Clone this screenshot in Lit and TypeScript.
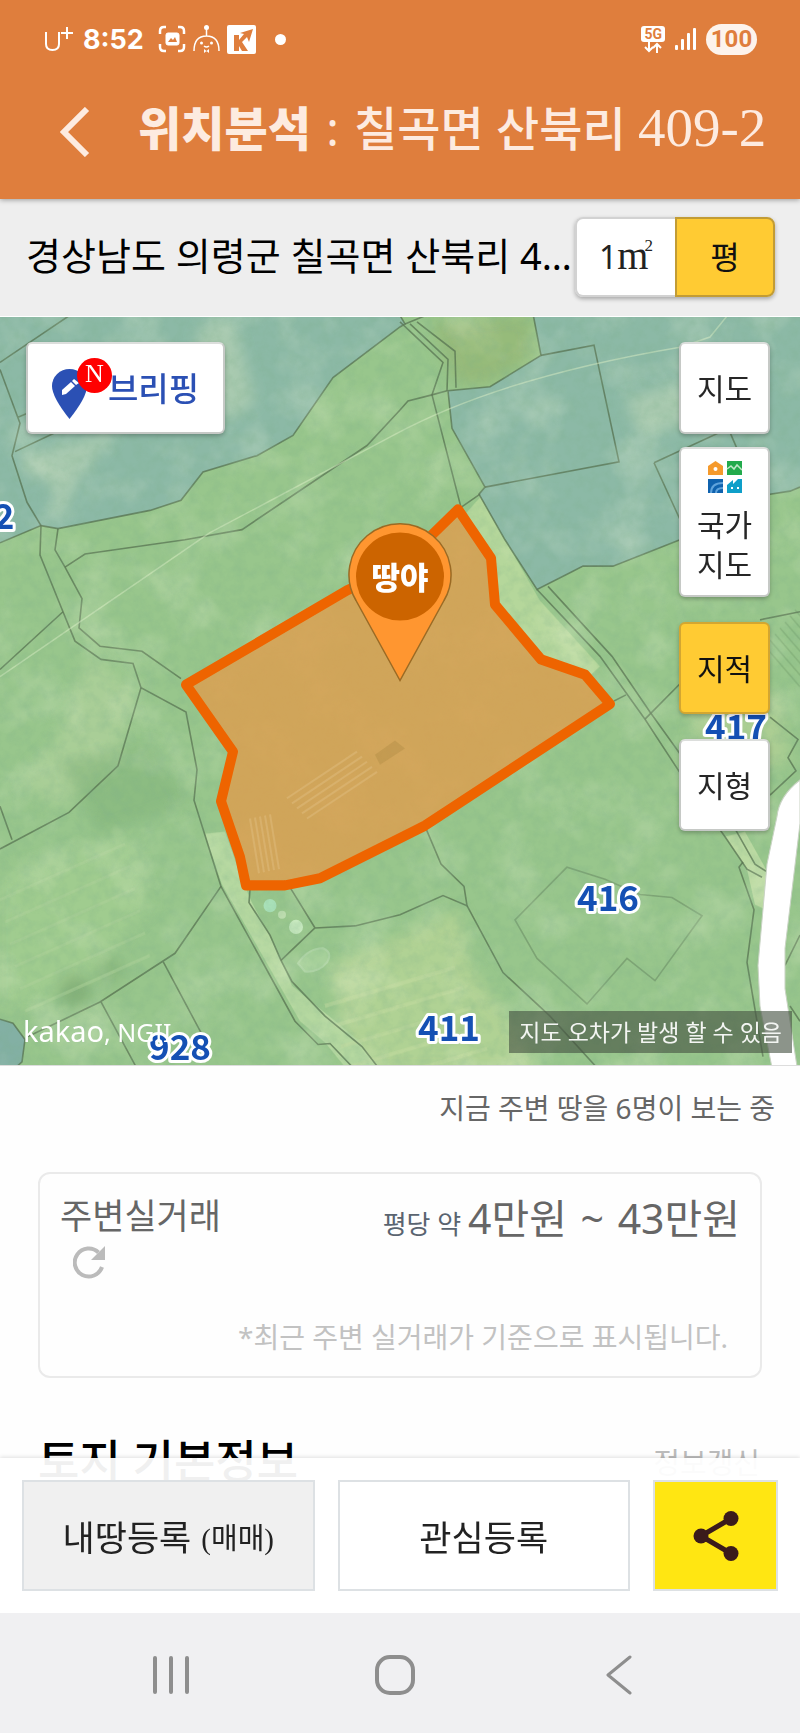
import { LitElement, html, css, svg } from "lit";
import { customElement, property, state } from "lit/decorators.js";
import { classMap } from "lit/directives/class-map.js";

const sans = css`"Noto Sans", "Noto Sans CJK KR", sans-serif`;
const serif = css`"Liberation Serif", "Noto Sans CJK KR", serif`;

/* Cadastral boundaries, in map canvas coordinates. */
const BOUNDARIES = [
  "M72 317L0 365M0 372L20 425L12 457L27 503L41 526M18 419L28 415M15 453L56 434",
  "M400 412L367 447L242 530L185 540L85 554L65 567",
  "M41 526L40 555L63 611L75 640L101 658L133 662L141 686L186 710L197 767L194 797L221 882L295 1015L318 1038L330 1037L358 1066",
  "M58 529L55 550L65 567L82 598L79 627L100 645L142 650L181 677",
  "M63 611L0 668M141 686L118 763L69 809L0 845M0 803L12 836",
  "M221 882L175 948L100 996L60 1015L28 1030M163 956L203 1030M101 996L136 1060",
  "M250 885L249 898L270 930L281 955L292 976L325 1010L362 1040L380 1063",
  "M281 955L315 923L290 883M315 923L355 921L400 910L443 891L467 901L464 882L441 860L426 825",
  "M467 901L503 967L550 1010L598 1062",
  "M485 488L619 463L594 348L541 358M654 464L680 520M654 464L720 434L730 434L737 450",
  "M400 325L443 365L432 397L461 508M410 327L448 362L447 393M417 325L455 354L456 390",
  "M447 393L432 397L408 403L400 412M405 327L430 317M461 508L480 495",
  "M537 589L600 655L645 717L690 785L725 833L747 865L762 873M548 586L612 655L650 710L690 765L735 825L755 860L766 867",
  "M614 699L626 693M645 717L680 682M760 619L800 611M770 715L798 737L788 755L796 768L770 792",
  "M743 858L739 863L754 905L747 957L763 1050M785 960L800 930M790 1000L800 1015",
];

@customElement("land-map")
class LandMap extends LitElement {
  static styles = css`
    :host {
      display: block;
      position: absolute;
      inset: 0;
    }
    svg {
      display: block;
      width: 100%;
      height: 100%;
    }
    .edge {
      fill: none;
      stroke: #55704f;
      stroke-width: 1.6;
      stroke-opacity: 0.75;
    }
    .faint {
      stroke-opacity: 0.4;
    }
    .wire {
      fill: none;
      stroke: #d9edc4;
      stroke-width: 1.5;
      stroke-opacity: 0.5;
    }
    .lot {
      font: 700 35px/1 "Noto Sans CJK KR", sans-serif;
      fill: #1450b4;
      stroke: #fff;
      stroke-width: 6;
      stroke-linejoin: round;
      paint-order: stroke;
      text-anchor: middle;
    }
    .pin-text {
      font: 900 31px/1 "Noto Sans CJK KR", sans-serif;
      fill: #fff;
      text-anchor: middle;
    }
    .credit {
      font: 400 29px/1 "Noto Sans", sans-serif;
      fill: #fff;
    }
    .small {
      font-size: 25px;
    }
  `;

  private field(x: number, y: number, n: number, dx: number, dy: number, gx: number, gy: number) {
    return Array.from(
      { length: n },
      (_, i) => svg`<path d=${`M${x + gx * i} ${y + gy * i}l${dx} ${dy}`} />`,
    );
  }

  render() {
    return html`<svg viewBox="0 317 800 749" preserveAspectRatio="xMidYMid slice" role="img" aria-label="지적도">
      <defs>
        <filter id="grain" x="0" y="0" width="100%" height="100%">
          <feTurbulence type="fractalNoise" baseFrequency="0.09" numOctaves="4" seed="7" />
          <feColorMatrix values="0 0 0 0 0.2  0 0 0 0 0.42  0 0 0 0 0.25  1.3 0 0 0 -0.5" />
        </filter>
        <filter id="haze" x="0" y="0" width="100%" height="100%">
          <feTurbulence type="fractalNoise" baseFrequency="0.018" numOctaves="4" seed="21" />
          <feColorMatrix values="0 0 0 0 0.9  0 0 0 0 0.95  0 0 0 0 0.72  2.2 0 0 0 -1.02" />
        </filter>
        <filter id="soft" x="-30%" y="-30%" width="160%" height="160%">
          <feGaussianBlur stdDeviation="7" />
        </filter>
      </defs>
      <rect y="317" width="800" height="749" fill="#98c68c" />

      <g transform="translate(0 -7) scale(1 1.0135)">
        <g filter="url(#soft)">
          <path d="M90 650L135 690L118 755L60 805L20 780L55 740Z" fill="#b0d29b" opacity=".7" />
          <path d="M330 960L460 905L470 960L500 1000L540 1066L350 1066Z" fill="#b6d496" opacity=".8" />
          <path d="M0 870L130 830L150 900L90 970L0 1010Z" fill="#a3cd90" opacity=".8" />
          <path d="M430 325L530 317L535 360L485 388L455 385Z" fill="#96b877" opacity=".8" />
          <path d="M690 700L780 690L790 760L700 780Z" fill="#b0cf95" opacity=".8" />
          <path d="M60 760L150 740L190 800L100 830Z" fill="#80b277" opacity=".5" />
          <circle cx="75" cy="985" r="16" fill="#77a46c" opacity=".6" />
          <circle cx="110" cy="965" r="14" fill="#7cab72" opacity=".5" />
        </g>
        <path d="M464 516L481 497L505 540L540 600L600 665L590 674L541 655L497 604L493 556Z" fill="#b5d79b" />
        <path d="M205 830L225 828L240 870L252 898L272 935L292 980L360 1035L380 1066L350 1066L325 1036L300 1015L222 880Z" fill="#b5d8a0" />
        <path d="M725 833L745 828L766 865L766 905L755 900L747 865Z" fill="#bbdaa2" />
        <g stroke="#c3dba0" stroke-width="4" opacity=".5">
          ${this.field(325, 1000, 5, 130, -38, 8, 20)}
        </g>
        <g stroke="#aed19a" stroke-width="3" opacity=".5">
          ${this.field(0, 895, 6, 125, -55, 5, 22)}
        </g>
        <g stroke="#7da874" stroke-width="1.5" opacity=".6">
          ${this.field(765, 645, 7, 35, 40, 5, -6)}
        </g>
        <path d="M298 958q10 -15 25 -15q10 4 4 14q-8 10 -22 9z" fill="#a4cf98" stroke="#aed4a4" stroke-width="2" />
        <circle cx="270" cy="901" r="6.500" fill="#a8e0b8" />
        <circle cx="282" cy="910" r="4" fill="#bcdcae" />
        <circle cx="296" cy="922" r="7" fill="#c5e8bd" />

        <g fill="#8cb9a6">
          <path d="M0 317H399L405 327L400 330L333 380L293 437L257 457L203 473L181 501L150 511L58 529L41 526L0 543Z" />
          <path d="M533 317L541 358L490 389L448 393L452 430L485 488L479 495L505 540L537 589L583 566L613 566L680 540L770 495L790 492L800 488V317Z" />
          <path d="M0 1013L13 1017L25 1033L22 1055L10 1066H0Z" fill="#83b0a4" />
        </g>
        <g filter="url(#soft)" fill="#b8d3b5" opacity=".65">
          <path d="M20 458L120 432L85 470L60 520L50 518L55 485L25 475Z" />
          <path d="M205 325L235 325L255 405L225 425L195 345Z" />
          <path d="M625 400L680 385L705 420L640 440Z" />
        </g>
        <g class="edge">
          <path d="M0 543L41 526L58 529L150 511L181 501L203 473L257 457L293 437L333 380L400 330L405 327L399 317" />
          <path d="M533 317L541 358L490 389L448 393L452 430L485 488L479 495L505 540L537 589L583 566L613 566L680 540L770 495L790 492L800 488" />
          <path d="M0 1013L13 1017L25 1033L22 1055L10 1066" />
          ${BOUNDARIES.map((d) => svg`<path d=${d} />`)}
        </g>
        <path class="edge faint" d="M567 863L515 915L537 953L587 998L627 953L655 975L702 911L672 893L640 890L605 875Z" />
        <path class="wire" d="M0 675L210 533L395 436Q500 380 680 350L710 340L728 318" />
      </g>
      <rect y="317" width="800" height="749" filter="url(#haze)" opacity=".28" />
      <rect y="317" width="800" height="749" filter="url(#grain)" opacity=".36" />

      <g transform="translate(0 -7) scale(1 1.0135)">
        <path
          d="M800 777Q779 793 777 813L767 860L758 960L760 1000L773 1066H798L785 983V943L800 820Z"
          fill="#fff"
          stroke="#c9d3c4"
        />
        <path
          d="M458 510L491 558L495 604L541 658L585 673L610 702L425 822L320 874L285 881L246 881L240 853L221 798L233 749L186 683L347 590L400 566Z"
          fill="#daa052"
          fill-opacity=".86"
          stroke="#ee6400"
          stroke-width="10"
          stroke-linejoin="round"
        />
        <g stroke="#ddb878" stroke-width="2" opacity=".6">
          ${this.field(287, 795, 5, 70, -46, 5, 5)}
          ${this.field(250, 815, 5, 9, 54, 5, -1)}
        </g>
        <path d="M375 752l20 -14l10 8l-25 16z" fill="#b58f48" opacity=".5" />
      </g>

      <path d="M400 681L356 601A51 51 0 1 1 444 601Z" fill="#ff9630" stroke="#9a6a24" stroke-width="1.500" />
      <circle cx="400" cy="577" r="44" fill="#cc6400" />
      <text class="pin-text" x="400" y="589">땅야</text>

      <text class="lot" x="4" y="529">2</text>
      <text class="lot" x="736" y="740">417</text>
      <text class="lot" x="608" y="911">416</text>
      <text class="lot" x="449" y="1041">411</text>
      <text class="lot" x="180" y="1060">928</text>
      <text class="credit" x="23" y="1042">kakao<tspan class="small">, NGII</tspan></text>
    </svg>`;
  }
}

@customElement("status-bar")
class StatusBar extends LitElement {
  static styles = css`
    :host {
      display: flex;
      align-items: center;
      gap: 10px;
      height: 78px;
      padding: 0 43px;
      color: #fff;
      font-family: Inter, Roboto, sans-serif;
    }
    svg {
      display: block;
      flex: none;
    }
    .time {
      font-size: 27px;
      font-weight: 700;
    }
    .icons {
      display: flex;
      align-items: center;
      gap: 7px;
      margin-left: 4px;
      flex: 1;
    }
    .dot {
      width: 11px;
      height: 11px;
      margin-left: 12px;
      border-radius: 50%;
      background: #fff;
    }
    .net {
      display: grid;
      justify-items: center;
    }
    .gen {
      padding: 0 3px;
      border-radius: 3px;
      background: #fff;
      color: #df7e3d;
      font: 700 14px/16px Roboto, sans-serif;
    }
    .battery {
      min-width: 51px;
      border-radius: 16px;
      background: #fdf3ec;
      color: #df7e3d;
      font: 700 24px/31px Roboto, sans-serif;
      text-align: center;
    }
  `;

  render() {
    return html`
      <svg width="30" height="26" viewBox="0 0 30 26" fill="none" stroke="#fff" stroke-width="2">
        <path d="M3 6V18Q3 24 9.500 24T16 18V6M24 1V13M18 7H30" />
      </svg>
      <span class="time">8:52</span>
      <span class="icons">
        <svg width="28" height="28" viewBox="0 0 28 28" fill="none" stroke="#fff" stroke-width="2.500">
          <path d="M2 9V6Q2 2 6 2H8M20 2H22Q26 2 26 6V9M26 19V22Q26 26 22 26H20M8 26H6Q2 26 2 22V19" />
          <rect x="8" y="8" width="13" height="12" rx="2" fill="#fff" stroke-width="1" />
          <path d="M10 17L13 13L15 15L17 12L19 17Z" fill="#df7e3d" stroke="none" />
        </svg>
        <svg width="27" height="28" viewBox="0 0 27 28" fill="none" stroke="#fff" stroke-width="1.500">
          <path d="M1 26Q1 11 13.500 11T26 26M13.500 11V4M11 21q2.500 2 5 0" />
          <circle cx="13.500" cy="2.500" r="2.500" fill="#fff" stroke="none" />
          <circle cx="8.500" cy="18" r="1.500" fill="#fff" stroke="none" />
          <circle cx="18.500" cy="18" r="1.500" fill="#fff" stroke="none" />
          <path d="M11 24L16 28V24L11 28Z" fill="#fff" stroke="none" />
        </svg>
        <svg width="29" height="29" viewBox="0 0 29 29">
          <rect width="29" height="29" rx="2" fill="#fff" />
          <path d="M7 10H12V15L17 9L13 8L26 4L22 17L20 12L15 17L21 26H15L12 21V26H7Z" fill="#df7e3d" />
        </svg>
        <i class="dot"></i>
      </span>
      <span class="net">
        <span class="gen">5G</span>
        <svg width="18" height="11" viewBox="0 0 18 11" fill="none" stroke="#fff" stroke-width="2">
          <path d="M5 0V9M1 5L5 9L9 5M13 11V2M9 6L13 2L17 6" />
        </svg>
      </span>
      <svg width="21" height="22" viewBox="0 0 21 22" fill="#fff">
        <rect y="17" width="3" height="5" rx="1" />
        <rect x="6" y="11" width="3" height="11" rx="1" />
        <rect x="12" y="5" width="3" height="17" rx="1" />
        <rect x="18" width="3" height="22" rx="1" />
      </svg>
      <span class="battery">100</span>
    `;
  }
}

@customElement("map-button")
class MapButton extends LitElement {
  @property({ type: Boolean }) active = false;

  static styles = css`
    :host {
      display: block;
    }
    button {
      display: flex;
      flex-direction: column;
      align-items: center;
      justify-content: center;
      gap: 12px;
      width: 100%;
      min-height: 92px;
      padding: 12px 8px 10px;
      border: 2px solid #c6c9c6;
      border-top-color: #dcdedc;
      border-radius: 6px;
      background: #fff;
      box-shadow: 0 2px 4px rgba(0, 0, 0, 0.25);
      color: #262626;
      font: 400 30px/40px ${sans};
    }
    .on {
      border-color: #d3a631;
      background: #ffcb33;
      color: #111;
    }
  `;

  render() {
    return html`<button class=${classMap({ on: this.active })} aria-pressed=${this.active}>
      <slot></slot>
    </button>`;
  }
}

@customElement("app-root")
class AppRoot extends LitElement {
  @state() private unit: "m2" | "py" = "py";

  static styles = css`
    :host {
      display: block;
      min-height: 100vh;
      background: #fefefe;
      color: #000;
      font-family: ${sans};
    }
    * {
      box-sizing: border-box;
    }
    button {
      margin: 0;
      padding: 0;
      border: 0;
      background: none;
      color: inherit;
      font: inherit;
      cursor: pointer;
    }
    svg {
      display: block;
    }
    h1,
    h2,
    p {
      margin: 0;
      font-weight: 400;
    }
    .header {
      position: relative;
      z-index: 1;
      background: #df7e3d;
      color: #fdebe0;
      box-shadow: 0 1px 5px rgba(0, 0, 0, 0.35);
    }
    .titlebar {
      display: flex;
      align-items: center;
      gap: 48px;
      height: 121px;
      padding: 0 32px 14px 60px;
    }
    .title {
      flex: 1;
      padding-bottom: 8px;
      font-size: 47px;
      line-height: 64px;
      font-weight: 500;
      white-space: nowrap;
    }
    .title b {
      font-weight: 900;
    }
    .thin {
      margin: 0 3px;
      font-weight: 400;
    }
    .lot {
      font-family: ${serif};
      font-size: 55px;
      font-weight: 400;
      line-height: 1;
    }
    .address-row {
      display: flex;
      align-items: center;
      height: 118px;
      padding: 0 25px 6px 26px;
      border-bottom: 1px solid #fff;
      background: #eee;
    }
    .address {
      flex: 1;
      min-width: 0;
      overflow: hidden;
      font-size: 38px;
      line-height: 56px;
      text-overflow: ellipsis;
      white-space: nowrap;
    }
    .units {
      display: grid;
      grid-template-columns: 1fr 1fr;
      flex: none;
      width: 200px;
      height: 80px;
      margin-top: 4px;
      border-radius: 8px;
      box-shadow: 0 2px 4px rgba(0, 0, 0, 0.3);
    }
    .unit {
      border: 2px solid #d2d2d2;
      border-right-width: 0;
      border-radius: 8px 0 0 8px;
      background: #fff;
      color: #222;
      font-size: 32px;
    }
    .unit + .unit {
      padding-bottom: 4px;
      border-right-width: 2px;
      border-radius: 0 8px 8px 0;
    }
    .unit.on {
      border-color: #c29c35;
      background: #ffcb33;
      color: #111;
    }
    .unit .m {
      font-family: ${serif};
      font-size: 40px;
      line-height: 1;
    }
    .unit .m sup {
      margin-left: -4px;
      font-size: 17px;
      line-height: 0;
      vertical-align: 18px;
    }
    .map {
      position: relative;
      height: 749px;
      border-bottom: 1px solid #ddd;
      overflow: hidden;
    }
    .briefing {
      position: absolute;
      top: 25px;
      left: 26px;
      width: 199px;
    }
    .briefing-row {
      display: flex;
      align-items: center;
      gap: 21px;
      color: #2b50b4;
      font-size: 33px;
      font-weight: 500;
    }
    .pin {
      position: relative;
      padding-top: 8px;
      margin-bottom: -2px;
    }
    .new {
      position: absolute;
      top: -3px;
      left: 25px;
      width: 35px;
      height: 35px;
      border-radius: 50%;
      background: #f00;
      color: #fff;
      font: 400 26px/32px ${serif};
      text-align: center;
    }
    .tools {
      position: absolute;
      top: 25px;
      right: 30px;
      display: grid;
      gap: 25px;
      width: 91px;
    }
    .group {
      display: grid;
      gap: 13px;
    }
    .two-line {
      max-width: 60px;
      text-align: center;
    }
    .notice {
      position: absolute;
      right: 8px;
      bottom: 12px;
      padding: 0 10px;
      background: rgba(70, 82, 66, 0.62);
      color: #f3f5f2;
      font-size: 23px;
      line-height: 42px;
    }
    .content {
      display: grid;
      padding: 20px 38px 0;
    }
    .viewers {
      margin: 0 -13px 42px 0;
      color: #666;
      font-size: 28px;
      line-height: 44px;
      text-align: right;
    }
    .card {
      display: grid;
      gap: 36px;
      height: 206px;
      padding: 12px 20px;
      border: 2px solid #eaeaea;
      border-radius: 12px;
      color: #666;
      align-content: start;
    }
    .deal {
      display: flex;
      justify-content: space-between;
      align-items: flex-start;
    }
    .label {
      font-size: 35px;
      line-height: 60px;
    }
    .refresh {
      display: block;
      margin-left: 13px;
    }
    .price {
      font-size: 41px;
      line-height: 64px;
    }
    .tilde {
      margin: 0 3px;
    }
    .approx {
      color: #5a6470;
      font-size: 26px;
    }
    .note {
      padding-right: 12px;
      color: #c2c2c2;
      font-size: 28px;
      line-height: 44px;
      text-align: right;
    }
    .section {
      display: flex;
      align-items: center;
      justify-content: space-between;
      margin-top: 51px;
      padding-right: 2px;
    }
    .section h2 {
      font-size: 45px;
      font-weight: 500;
      line-height: 64px;
    }
    .update {
      color: #bbb;
      font-size: 29px;
    }
    .dock {
      position: fixed;
      right: 0;
      bottom: 0;
      left: 0;
    }
    .actions {
      display: grid;
      grid-template-columns: 1fr 1fr 125px;
      gap: 23px;
      padding: 22px;
      background: rgba(255, 255, 255, 0.94);
      box-shadow: 0 -1px 4px rgba(0, 0, 0, 0.12);
    }
    .action {
      display: flex;
      align-items: center;
      justify-content: center;
      gap: 10px;
      height: 111px;
      border: 2px solid #dde1e4;
      background: #fff;
      color: #222;
      font-size: 35px;
    }
    .mine {
      background: #f0f0f0;
    }
    .kind {
      font-family: ${serif};
      font-size: 29px;
    }
    .share {
      background: #ffe612;
    }
    .nav {
      display: grid;
      grid-template-columns: repeat(3, 224px);
      justify-content: center;
      align-items: center;
      height: 120px;
      padding: 4px 10px 0 0;
      background: #f0f0f2;
    }
    .nav button {
      display: grid;
      place-items: center;
      height: 80px;
    }
  `;

  render() {
    return html`
      <header class="header">
        <status-bar></status-bar>
        <div class="titlebar">
          <button aria-label="뒤로">
            <svg width="30" height="50" viewBox="0 0 30 50" fill="none" stroke="#fdebe0" stroke-width="6">
              <path d="M27 2L4 25L27 48" />
            </svg>
          </button>
          <h1 class="title"><b>위치분석</b> <span class="thin">:</span> 칠곡면 산북리 <span class="lot">409-2</span></h1>
        </div>
      </header>

      <div class="address-row">
        <p class="address">경상남도 의령군 칠곡면 산북리 409-2</p>
        <div class="units" role="group" aria-label="면적 단위">
          <button class=${classMap({ unit: true, on: this.unit === "m2" })} @click=${() => (this.unit = "m2")}>
            1<span class="m">m<sup>2</sup></span>
          </button>
          <button class=${classMap({ unit: true, on: this.unit === "py" })} @click=${() => (this.unit = "py")}>
            평
          </button>
        </div>
      </div>

      <section class="map">
        <land-map></land-map>
        <map-button class="briefing">
          <span class="briefing-row">
            <span class="pin">
              <svg width="35" height="50" viewBox="0 0 35 50">
                <path d="M17.500 50Q0 28 0 17A17.500 17 0 0 1 35 17Q35 28 17.500 50Z" fill="#2b50b4" />
                <path d="M10 21L19 13L23 17L14 25L10 26ZM20 12L22 10L27 14L24 16Z" fill="#fff" />
              </svg>
              <span class="new">N</span>
            </span>
            브리핑
          </span>
        </map-button>
        <div class="tools">
          <div class="group">
            <map-button>지도</map-button>
            <map-button>
              <svg width="34" height="32" viewBox="0 0 34 32">
                <path d="M0 14V5L7.500 0L15 5V14Z" fill="#f59a2c" />
                <circle cx="7.500" cy="8" r="2" fill="#fff" />
                <rect x="19" width="15" height="14" fill="#22aa4c" />
                <path d="M19 8L23 5L26 8L29 4L34 9" fill="none" stroke="#bfe8c8" stroke-width="1.500" />
                <rect y="18" width="15" height="14" fill="#0f62ae" />
                <path d="M3 32Q3 22 15 22M8 32Q8 27 15 27" fill="none" stroke="#5fa3dc" stroke-width="2" />
                <path d="M19 32V24L25 19V23L30 18H34V32Z" fill="#0e9fc9" />
                <path d="M23 26h2v2h-2zM29 26h2v2h-2z" fill="#fff" />
              </svg>
              <span class="two-line">국가 지도</span>
            </map-button>
          </div>
          <map-button active>지적</map-button>
          <map-button>지형</map-button>
        </div>
        <p class="notice">지도 오차가 발생 할 수 있음</p>
      </section>

      <main class="content">
        <p class="viewers">지금 주변 땅을 6명이 보는 중</p>
        <section class="card">
          <div class="deal">
            <div>
              <p class="label">주변실거래</p>
              <button class="refresh" aria-label="새로고침">
                <svg width="32" height="33" viewBox="0 0 32 33" fill="none">
                  <path d="M25.500 6.500A14 14 0 1 0 29 21" stroke="#bbb" stroke-width="4" />
                  <path d="M32 0V14H18Z" fill="#bbb" />
                </svg>
              </button>
            </div>
            <p class="price"><span class="approx">평당 약 </span>4만원 <span class="tilde">~</span> 43만원</p>
          </div>
          <p class="note">*최근 주변 실거래가 기준으로 표시됩니다.</p>
        </section>
        <section class="section">
          <h2>토지 기본정보</h2>
          <button class="update">정보갱신</button>
        </section>
      </main>

      <footer class="dock">
        <div class="actions">
          <button class="action mine">내땅등록 <span class="kind">(매매)</span></button>
          <button class="action">관심등록</button>
          <button class="action share" aria-label="공유">
            <svg width="46" height="50" viewBox="0 0 46 50" fill="#3b1b1b">
              <path d="M38 7.500L8 25L38 42.500" fill="none" stroke="#3b1b1b" stroke-width="5" />
              <circle cx="38" cy="7.500" r="7.500" />
              <circle cx="8" cy="25" r="7.500" />
              <circle cx="38" cy="42.500" r="7.500" />
            </svg>
          </button>
        </div>
        <nav class="nav">
          <button aria-label="최근 앱">
            <svg width="38" height="40" viewBox="0 0 38 40" stroke="#8e8e8e" stroke-width="4" stroke-linecap="round">
              <path d="M3 3V37M19 3V37M35 3V37" />
            </svg>
          </button>
          <button aria-label="홈">
            <svg width="40" height="40" viewBox="0 0 40 40" fill="none" stroke="#8e8e8e" stroke-width="4">
              <rect x="2" y="2" width="36" height="36" rx="13" />
            </svg>
          </button>
          <button aria-label="이전">
            <svg width="26" height="40" viewBox="0 0 26 40" fill="none" stroke="#8e8e8e" stroke-width="3" stroke-linecap="round" stroke-linejoin="round">
              <path d="M24 2L2 20L24 38" />
            </svg>
          </button>
        </nav>
      </footer>
    `;
  }
}
